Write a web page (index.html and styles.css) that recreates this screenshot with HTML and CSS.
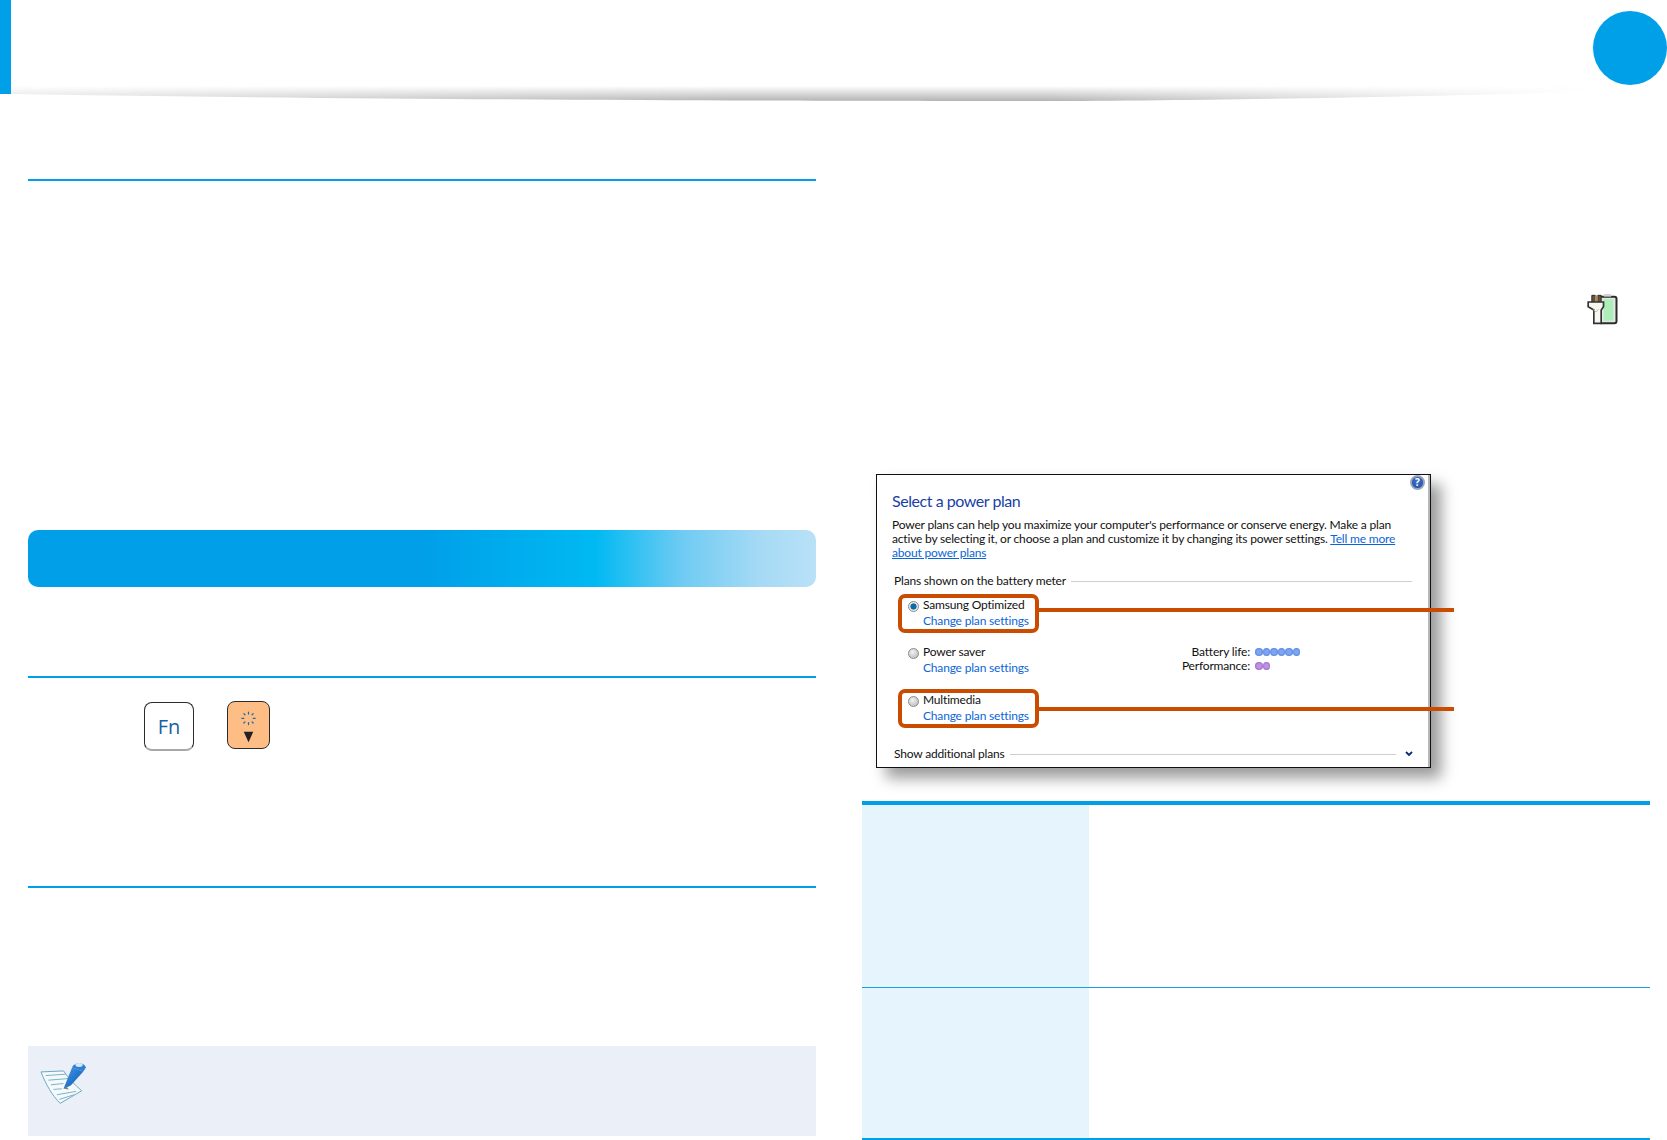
FILE: index.html
```html
<!DOCTYPE html>
<html lang="en">
<head>
<meta charset="utf-8">
<title>Select a power plan</title>
<link rel="stylesheet" href="styles.css">
</head>
<body>
<header class="top">
  <svg class="top-shadow" viewBox="0 0 1667 110" aria-hidden="true">
    <defs>
      <linearGradient id="shadeV" gradientUnits="userSpaceOnUse" x1="0" y1="86" x2="0" y2="101">
        <stop offset="0" stop-color="#b4b4b4" stop-opacity="0"/>
        <stop offset="1" stop-color="#b4b4b4"/>
      </linearGradient>
      <linearGradient id="shadeH" gradientUnits="userSpaceOnUse" x1="11" y1="0" x2="1600" y2="0">
        <stop offset="0" stop-color="#fff" stop-opacity=".4"/>
        <stop offset=".45" stop-color="#fff"/>
        <stop offset=".65" stop-color="#fff"/>
        <stop offset="1" stop-color="#fff" stop-opacity="0"/>
      </linearGradient>
      <mask id="shadeM" maskUnits="userSpaceOnUse" x="0" y="0" width="1667" height="110">
        <rect width="1667" height="110" fill="url(#shadeH)"/>
      </mask>
    </defs>
    <path d="M11 84H1600V91C1500 95 1200 101 1030 101C800 101 400 100 11 94Z" fill="url(#shadeV)" mask="url(#shadeM)"/>
  </svg>
  <div class="top-bar"></div>
  <div class="top-dot"></div>
</header>

<main class="page">
  <section class="col-left">
    <div class="rule rule-a"></div>
    <div class="banner"></div>
    <div class="rule rule-b"></div>
    <div class="keys">
      <div class="key key-fn">Fn</div>
      <div class="key key-dim">
        <svg class="key-glyph" viewBox="0 0 43 48" aria-hidden="true">
          <g stroke="#1f6aa5" stroke-width="1.3" stroke-linecap="round">
            <path d="M21.5 10.500v2M21.5 21.500v2M14.500 17h2M26.500 17h2M16.600 12.100l1.200 1.200M25.200 20.700l1.200 1.200M26.400 12.100l-1.200 1.200M17.800 20.700l-1.200 1.200"/>
          </g>
          <path d="M16.500 31h10l-5 11z" fill="#222"/>
        </svg>
      </div>
    </div>
    <div class="rule rule-c"></div>
    <div class="note">
      <svg class="note-icon" viewBox="120 92 140 130" aria-hidden="true">
        <defs>
          <linearGradient id="pencil" x1="0" y1="0" x2="1" y2="1">
            <stop offset="0" stop-color="#3f9be8"/>
            <stop offset="1" stop-color="#0f55b0"/>
          </linearGradient>
        </defs>
        <path d="M122 125L190 122C205 145 225 165 245 182L180 220C155 195 138 165 122 125Z" fill="#f4f9fc" stroke="#6ea6bf" stroke-width="3"/>
        <path d="M136 136L196 132M144 150L206 145M152 164L190 160M160 178L185 176M170 194L228 184M178 208L222 194" fill="none" stroke="#7fb0c6" stroke-width="3"/>
        <path d="M190 176L216 112L250 124L212 166Z" fill="url(#pencil)"/>
        <path d="M216 112C220 98 250 92 258 112L250 124Z" fill="#2f7fd6"/>
        <ellipse cx="237" cy="104" rx="11" ry="6" fill="#d8e8f6"/>
        <path d="M190 176L200 170L206 178Z" fill="#8a7f70"/>
      </svg>
    </div>
  </section>

  <section class="col-right">
    <svg class="plug" viewBox="560 882 92 93" aria-hidden="true">
      <rect x="596" y="890" width="52" height="80" rx="6" fill="#dfe8e2" stroke="#2c2c2c" stroke-width="6"/>
      <rect x="610" y="898" width="28" height="64" fill="#aeeeb8"/>
      <rect x="610" y="882" width="22" height="8" fill="#cfd6d0"/>
      <path d="M574 886h10v22h-10zM592 886h10v22h-10z" fill="#6b5136" stroke="#2c2c2c" stroke-width="3"/>
      <path d="M583 886h9v20h-9z" fill="#a08a66"/>
      <path d="M563 906h46v14l-7 10v40h-22v-40l-17-10z" fill="#f7f7f2" stroke="#333" stroke-width="5"/>
      <path d="M578 928l8 8 8-8" fill="none" stroke="#b9b9b0" stroke-width="3"/>
    </svg>

    <div class="window">
      <div class="help">?</div>
      <h1 class="win-title">Select a power plan</h1>
      <p class="win-text">Power plans can help you maximize your computer's performance or conserve energy. Make a plan<br>active by selecting it, or choose a plan and customize it by changing its power settings. <a class="link" href="#">Tell me more</a><br><a class="link" href="#">about power plans</a></p>
      <div class="group-head group-first"><span>Plans shown on the battery meter</span><i class="group-line"></i></div>

      <div class="plan-row">
        <div class="plan plan-marked">
          <span class="radio radio-on"></span>
          <div class="plan-name">Samsung Optimized</div>
          <a class="plan-link" href="#">Change plan settings</a>
          <span class="connector"></span>
        </div>
      </div>
      <div class="plan-row">
        <div class="plan">
          <span class="radio"></span>
          <div class="plan-name">Power saver</div>
          <a class="plan-link" href="#">Change plan settings</a>
        </div>
        <div class="stats">
          <span class="stat-label">Battery life:</span>
          <span class="dots dots-blue"><i></i><i></i><i></i><i></i><i></i><i></i></span>
          <span class="stat-label">Performance:</span>
          <span class="dots dots-purple"><i></i><i></i></span>
        </div>
      </div>
      <div class="plan-row">
        <div class="plan plan-marked">
          <span class="radio"></span>
          <div class="plan-name">Multimedia</div>
          <a class="plan-link" href="#">Change plan settings</a>
          <span class="connector connector-low"></span>
        </div>
      </div>

      <div class="group-head group-last"><span>Show additional plans</span><i class="group-line"></i>
        <svg class="chevron" viewBox="0 0 8 6" aria-hidden="true"><path d="M1 1l3 3 3-3" fill="none" stroke="#0a2a7a" stroke-width="1.800"/></svg>
      </div>
    </div>

    <div class="table">
      <div class="cell-head row-one"></div><div class="cell-body row-one"></div>
      <div class="cell-head row-two"></div><div class="cell-body row-two"></div>
    </div>
  </section>
</main>
</body>
</html>
```

FILE: styles.css
```css
* { box-sizing: border-box; }
html, body { margin: 0; padding: 0; background: #fff; }
body { width: 1667px; height: 1140px; overflow: hidden; font-family: "Lato", "Open Sans", sans-serif; }

.top { position: relative; height: 110px; display: flex; justify-content: space-between; align-items: flex-start; }
.top-shadow { position: absolute; left: 0; top: 0; width: 1667px; height: 110px; }
.top-bar { width: 11px; height: 94px; background: #00a0e9; position: relative; }
.top-dot { width: 74px; height: 74px; margin-top: 11px; border-radius: 50%; background: #00a0e9; position: relative; }

.page { display: flex; padding-left: 28px; }
.col-left { width: 788px; }
.col-right { width: 788px; margin-left: 46px; display: flex; flex-direction: column; }

.rule { height: 2px; background: #00a0e9; }
.rule-a { margin-top: 69px; }
.rule-b { margin-top: 89px; }
.rule-c { margin-top: 135px; }

.banner {
  margin-top: 349px; height: 57px; border-radius: 10px;
  background: linear-gradient(90deg, #009fe8 0%, #009fe8 50%, #00b9f2 72%, #6fcbf3 83%, #a6daf5 93%, #b9e1f7 100%);
}

.keys { margin-top: 23px; padding-left: 116px; display: flex; align-items: flex-start; gap: 33px; }
.key { border: 1px solid #2b2b2b; border-radius: 8px; }
.key-fn {
  width: 50px; height: 49px; margin-top: 1px; background: #fff; border-bottom: 2px solid #a8a8a8;
  display: flex; align-items: center; justify-content: center;
  font-family: "Open Sans", sans-serif; font-size: 20px; color: #1a5f9e;
}
.key-dim { width: 43px; height: 48px; background: #fdbd85; }
.key-glyph { display: block; width: 41px; height: 46px; }

.note { margin-top: 158px; height: 90px; background: #ebeff8; padding: 15px 12px; }
.note-icon { display: block; width: 47px; height: 43px; filter: blur(.4px); }

.plug { width: 31px; height: 31px; margin-top: 184px; margin-left: 725px; display: block; filter: blur(.4px); }

.window {
  position: relative; margin-top: 149px; margin-left: 14px; width: 555px; height: 294px;
  padding: 15px 0 0 15px; background: #fff; border: 1px solid #111;
  box-shadow: inset -2px 0 0 #b5b8bb, 10px 10px 14px rgba(0, 0, 0, .4);
  font-size: 12px; letter-spacing: -.18px; color: #111; line-height: 14px;
}
.help {
  position: absolute; right: 5px; top: 0; width: 15px; height: 15px; border-radius: 50%;
  background: radial-gradient(circle at 50% 40%, #3f74cf, #1d4a9c); border: 2px solid #9aa5bb; color: #fff;
  font: 700 10px/11px "Open Sans", sans-serif; letter-spacing: 0; text-align: center;
}
.win-title { margin: 0; font-size: 16px; letter-spacing: -.45px; line-height: 22px; font-weight: 400; color: #1a3fa8; }
.win-text { margin: 6px 0 0; white-space: nowrap; }
.link { color: #0a66d8; text-decoration: underline; }

.group-head { display: flex; align-items: center; padding-left: 2px; }
.group-first { margin-top: 14px; width: 520px; }
.group-last { margin-top: 19px; width: 521px; }
.group-line { flex: 1; height: 1px; background: #cfcfcf; margin-left: 5px; }
.chevron { width: 8px; height: 6px; margin-left: 9px; }

.plan-row { display: flex; align-items: flex-start; margin-left: 6px; margin-bottom: 8px; }
.group-first + .plan-row { margin-top: 6px; }
.plan-row:has(+ .plan-row + .group-last) { margin-bottom: 9px; }
.plan-row:has(+ .group-last) { margin-bottom: 0; }
.plan {
  position: relative; width: 141px; height: 39px; padding-left: 21px;
  border: 4px solid transparent; border-radius: 7px; line-height: 16px; white-space: nowrap;
}
.plan-marked { border-color: #c94c00; }
.plan-name { color: #111; margin-top: -1px; }
.plan-link { color: #0a66d8; text-decoration: none; }
.connector { position: absolute; left: calc(100% + 4px); top: 10px; width: 415px; height: 4px; background: #c94c00; }
.connector-low { top: 14px; }

.radio {
  position: absolute; left: 6px; top: 3px; width: 11px; height: 11px; border-radius: 50%;
  background: radial-gradient(circle at 40% 35%, #f2f2f2, #b4b4b4); border: 1px solid #8a8a8a;
}
.radio-on { background: radial-gradient(circle, #0d6aa8 0 2.8px, #eaeaea 3.4px); }

.stats { margin-left: 111px; padding-top: 4px; display: grid; grid-template-columns: 100px auto; column-gap: 5px; align-items: center; }
.stat-label { text-align: right; white-space: nowrap; }
.dots { display: flex; }
.dots i { width: 7.500px; height: 7.500px; border-radius: 50%; display: block; }
.dots-blue i { background: radial-gradient(circle, #7ea6f0 0 35%, #3f70d8 100%); }
.dots-purple i { background: radial-gradient(circle, #bd92e0 0 35%, #8a52c0 100%); }

.table { margin-top: 33px; border-top: 4px solid #00a0e9; border-bottom: 2px solid #00a0e9; display: grid; grid-template-columns: 227px 1fr; grid-template-rows: 183px 150px; }
.cell-head { background: #e6f4fd; }
.row-one { border-bottom: 1px solid #1a9fe0; }
```
